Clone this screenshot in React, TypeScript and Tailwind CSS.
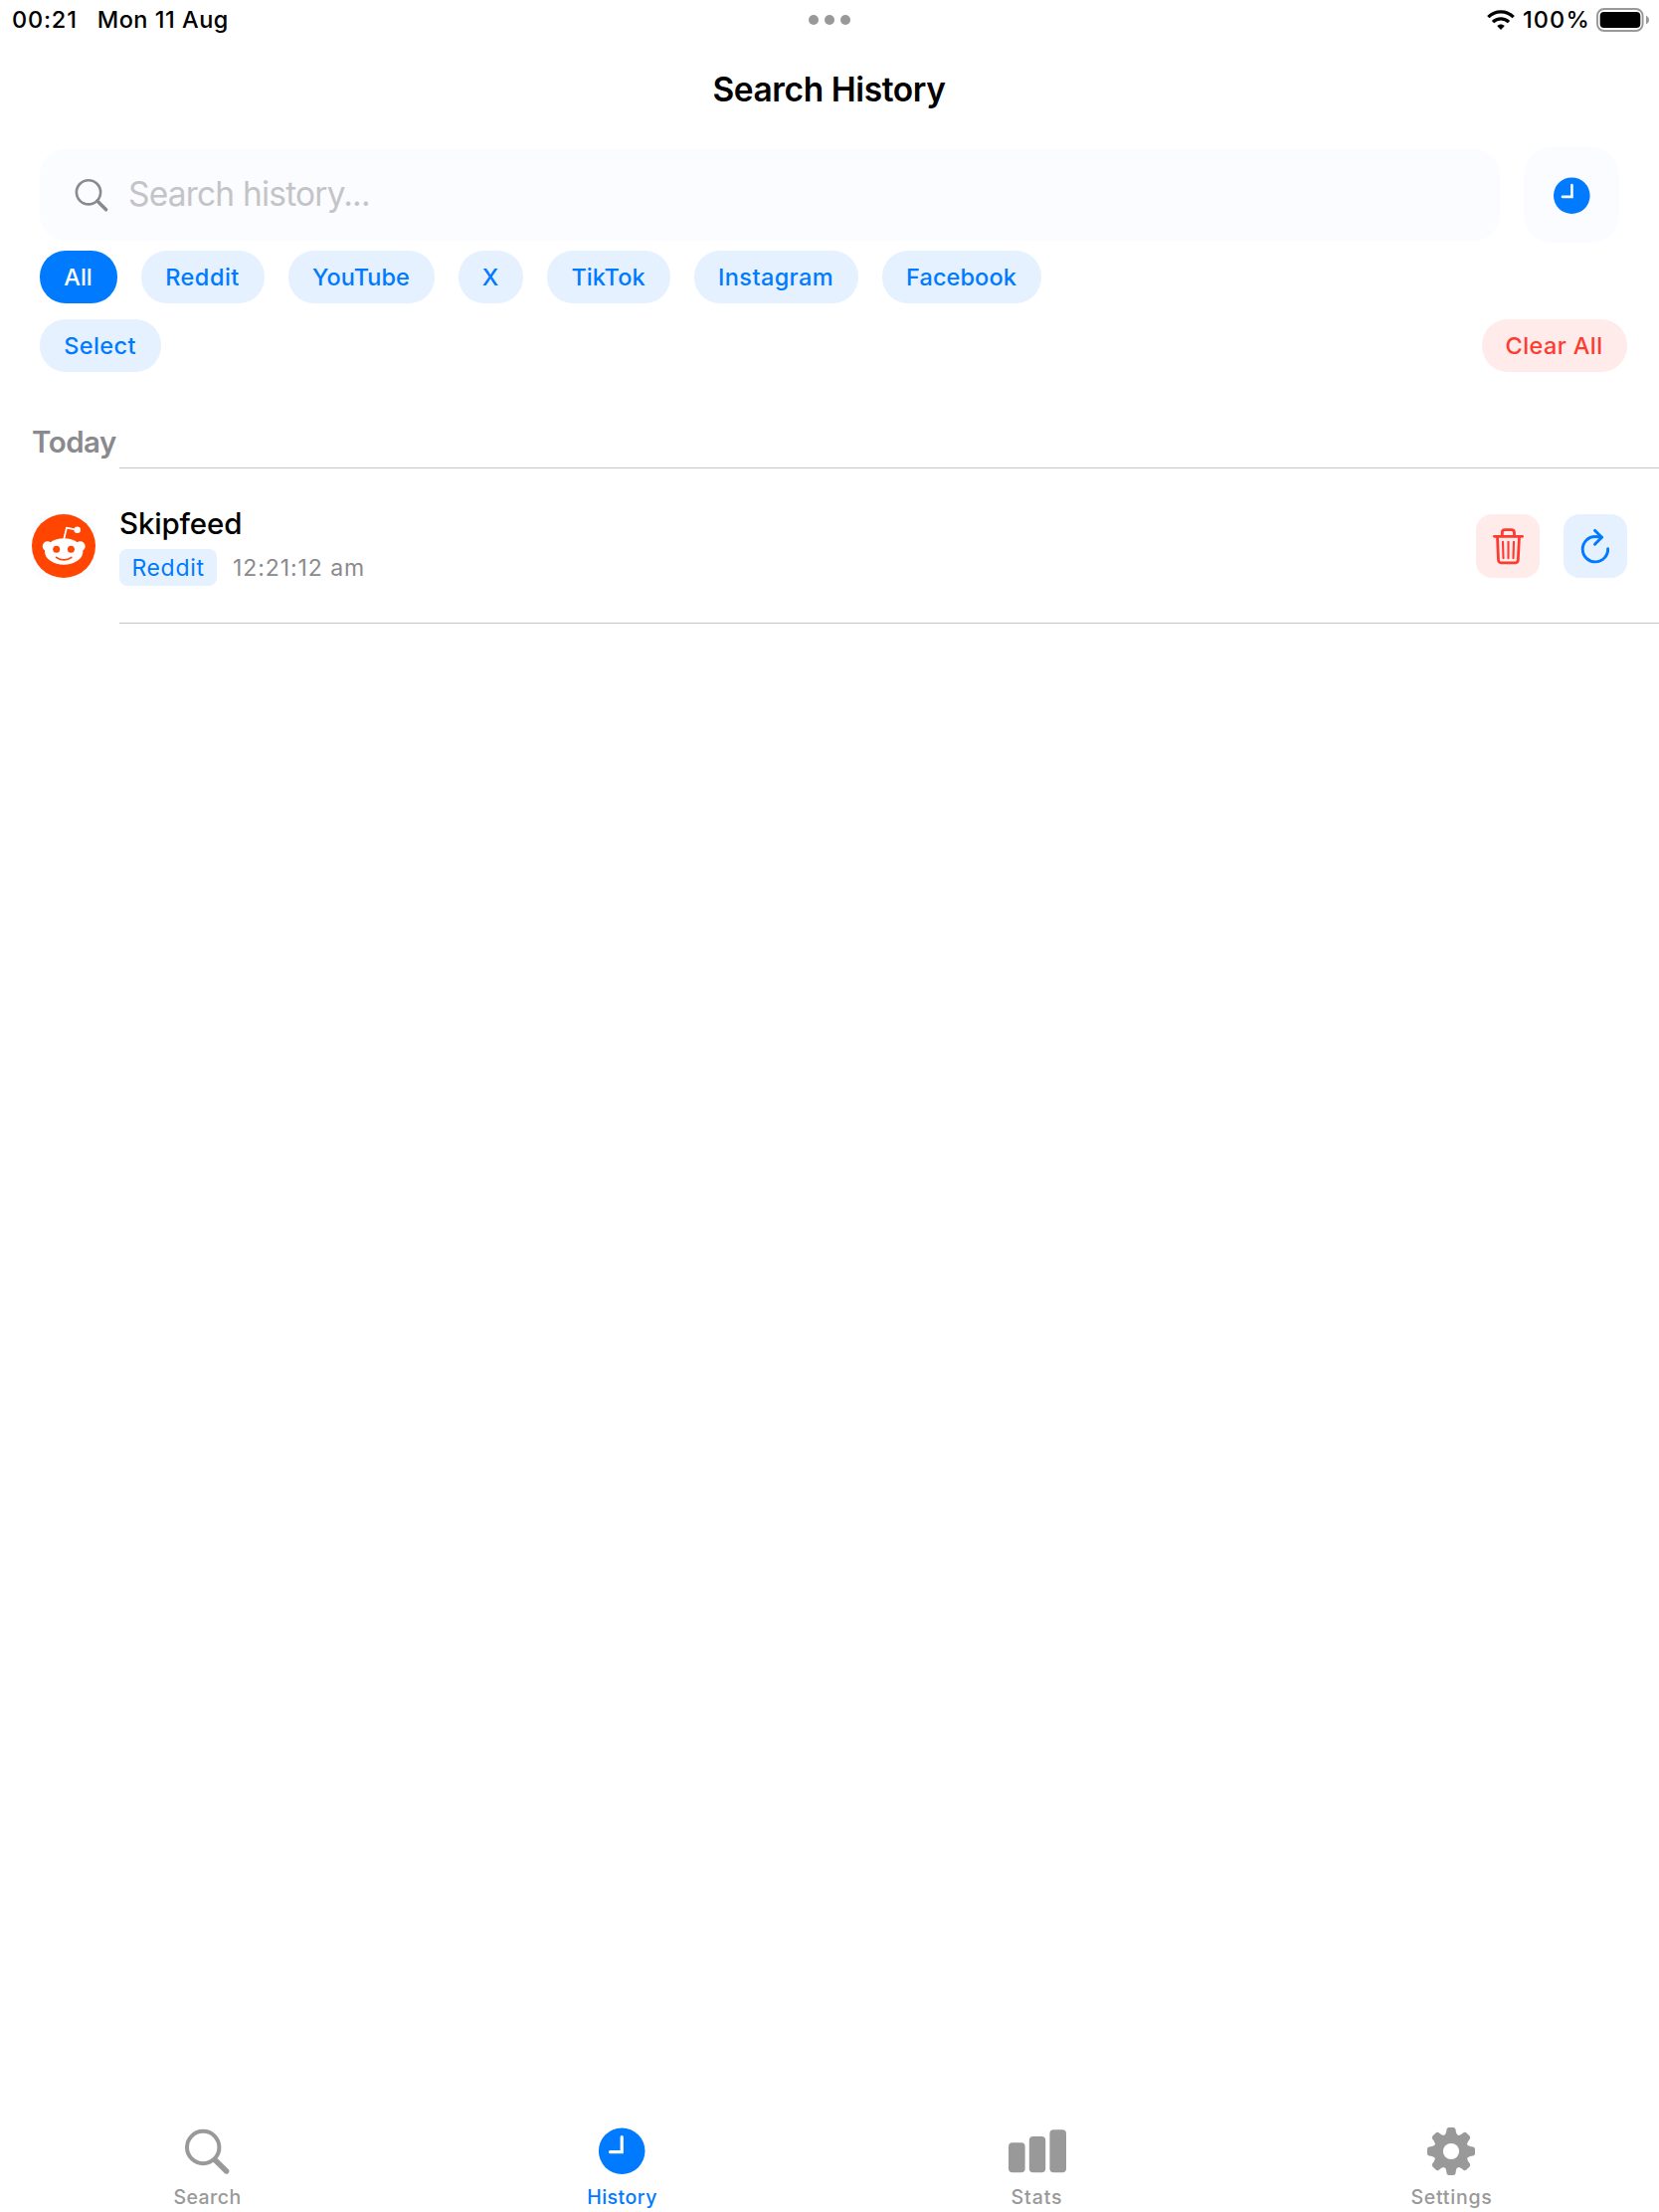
import type { ReactNode } from "react";

const GEAR_ANGLES = [0, 45, 90, 135, 180, 225, 270, 315];

function WifiIcon() {
  return (
    <svg width="28" height="20" viewBox="0 0 28 20" fill="none" stroke="#000" strokeWidth="3.3">
      <path d="M1.3 7.2C8.4 0.1 19.6 0.1 26.7 7.2" />
      <path d="M6 12.1C10.5 7.7 17.5 7.7 22 12.1" />
      <path d="M14 20L10.2 16.1C12.3 14 15.7 14 17.8 16.1Z" fill="#000" stroke="none" />
    </svg>
  );
}

function BatteryIcon() {
  return (
    <svg width="54" height="24" viewBox="0 0 54 24" fill="none">
      <rect x="1" y="1" width="45.6" height="22" rx="6.8" stroke="#999" strokeWidth="1.9" />
      <rect x="3.7" y="4" width="40.6" height="16" rx="4" fill="#000" />
      <path d="M50 7.7C51.8 8.4 53 10 53 12S51.8 15.6 50 16.3Z" fill="#999" />
    </svg>
  );
}

function SearchIcon() {
  return (
    <svg width="36" height="36" viewBox="0 0 36 36" fill="none" stroke="#8a8a8e" className="shrink-0">
      <circle cx="15" cy="15.3" r="12.1" strokeWidth="2.6" />
      <path d="M23.8 24L32.6 32.8" strokeWidth="3.5" strokeLinecap="round" />
    </svg>
  );
}

function ClockIcon() {
  return (
    <svg width="40" height="40" viewBox="0 0 40 40" fill="none">
      <circle cx="20.3" cy="20.7" r="18.3" fill="#007aff" />
      <path d="M20.4 10.2V21.8H11" stroke="#fbfcff" strokeWidth="2.7" strokeLinecap="round" />
    </svg>
  );
}

function RedditLogo() {
  return (
    <svg width="64" height="64" viewBox="0 0 64 64" fill="none">
      <circle cx="32" cy="32" r="32" fill="#ff4500" />
      <circle cx="15.7" cy="32.2" r="4.9" fill="#fff" />
      <circle cx="48.7" cy="32.2" r="4.9" fill="#fff" />
      <ellipse cx="32.2" cy="37.5" rx="19.2" ry="13.2" fill="#fff" />
      <path d="M32.3 25L34.9 13.7L44.5 15.7" stroke="#fff" strokeWidth="1.8" strokeLinejoin="round" />
      <circle cx="45.7" cy="15.8" r="3.3" fill="#fff" />
      <circle cx="24.7" cy="35.3" r="3.5" fill="#ff4500" />
      <circle cx="39.4" cy="35.3" r="3.5" fill="#ff4500" />
      <path d="M24.6 43.4C28.400 46.7 36 46.7 39.8 43.4" stroke="#ff4500" strokeWidth="1.7" strokeLinecap="round" />
    </svg>
  );
}

function TrashIcon() {
  return (
    <svg width="64" height="64" viewBox="0 0 64 64" fill="none" stroke="#ff3b30" strokeLinecap="round" strokeLinejoin="round">
      <path d="M18.4 22.3H46.6" strokeWidth="2.8" />
      <path d="M26.3 22V18.6Q26.3 15.7 29.2 15.7H35.6Q38.5 15.7 38.5 18.6V22" strokeWidth="2.8" />
      <path d="M21.5 22.5L22.5 46Q22.7 48.8 25.4 48.8H39.4Q42.1 48.8 42.3 46L43.5 22.5" strokeWidth="2.8" />
      <path d="M27 27.8L27.5 44.2M32.5 27.8V44.2M38 27.8L37.5 44.2" strokeWidth="2.1" />
    </svg>
  );
}

function RefreshIcon() {
  return (
    <svg width="64" height="64" viewBox="0 0 64 64" fill="none" stroke="#007aff" strokeWidth="2.9" strokeLinecap="round" strokeLinejoin="round">
      <path d="M44.6 34.700A12.7 12.7 0 1 1 31.9 22.5Q34.8 22.5 38.4 23.1" />
      <path d="M31.5 16.4L38.5 23.2L31.5 30.3" />
    </svg>
  );
}

function TabSearchIcon() {
  return (
    <svg width="49" height="48" viewBox="0 0 49 48" fill="none" stroke="#999">
      <circle cx="20.2" cy="20" r="16.2" strokeWidth="4" />
      <path d="M32.5 33L43.7 44" strokeWidth="5.4" strokeLinecap="round" />
    </svg>
  );
}

function TabClockIcon() {
  return (
    <svg width="49" height="48" viewBox="0 0 49 48" fill="none">
      <circle cx="24.2" cy="23.7" r="23.3" fill="#007aff" />
      <path d="M24.2 9.5V24.7H12.5" stroke="#fff" strokeWidth="3.2" strokeLinecap="round" />
    </svg>
  );
}

function TabStatsIcon() {
  return (
    <svg width="65" height="48" viewBox="0 0 65 48" fill="#999">
      <rect x="4" y="15.2" width="16.6" height="30" rx="4" />
      <rect x="24.8" y="9" width="16.4" height="36.2" rx="4" />
      <rect x="45.4" y="2.2" width="16.6" height="43" rx="4" />
    </svg>
  );
}

function TabSettingsIcon() {
  return (
    <svg width="49" height="48" viewBox="0 0 49 48" fill="none">
      <g fill="#999">
        <circle cx="24" cy="24" r="17.5" />
        {GEAR_ANGLES.map((angle) => (
          <path
            key={angle}
            transform={`rotate(${angle} 24 24)`}
            d="M15.500 9.500Q18.6 7.6 19.1 4.8L19.5 2Q19.9 0 21.8 0H26.2Q28.1 0 28.5 2L28.900 4.8Q29.4 7.6 32.500 9.500Z"
          />
        ))}
      </g>
      <circle cx="24" cy="24" r="8.1" fill="#fff" />
    </svg>
  );
}

const pillBase = "flex h-[53px] items-center justify-center whitespace-nowrap rounded-[26px] pr-px text-[23.5px] font-medium";

const filters = [
  { label: "All", style: "w-[78px] bg-[#007aff] text-white" },
  { label: "Reddit", style: "w-[124px] bg-[#e5f1ff] text-[#007aff] tracking-[0.5px]" },
  { label: "YouTube", style: "w-[147px] bg-[#e5f1ff] text-[#007aff] tracking-[0.05px]" },
  { label: "X", style: "w-[65px] bg-[#e5f1ff] text-[#007aff]" },
  { label: "TikTok", style: "w-[124px] bg-[#e5f1ff] text-[#007aff] tracking-[0.05px]" },
  { label: "Instagram", style: "w-[165px] bg-[#e5f1ff] text-[#007aff] tracking-[0.4px]" },
  { label: "Facebook", style: "w-[160px] bg-[#e5f1ff] text-[#007aff] tracking-[0.1px]" },
];

function Tab({ icon, label, style }: { icon: ReactNode; label: string; style: string }) {
  return (
    <button className="flex flex-col items-center">
      {icon}
      <span className={`mt-2.5 text-[19.5px] leading-6 font-medium ${style}`}>{label}</span>
    </button>
  );
}

export default function App() {
  return (
    <div className="flex h-[2224px] w-[1668px] flex-col overflow-hidden bg-white font-['Inter',sans-serif] text-black">
      <header className="grid h-10 grid-cols-3 items-center text-[23.5px] font-medium">
        <div className="flex gap-[20px] pl-3 whitespace-nowrap">
          <span className="tracking-[0.8px]">00:21</span>
          <span className="tracking-[0.5px]">Mon 11 Aug</span>
        </div>
        <div className="flex justify-center gap-1.5">
          <span className="size-2.5 rounded-full bg-[#999]" />
          <span className="size-2.5 rounded-full bg-[#999]" />
          <span className="size-2.5 rounded-full bg-[#999]" />
        </div>
        <div className="flex items-center justify-end pr-[9px]">
          <WifiIcon />
          <span className="ml-2 w-[74px] tracking-[1.1px]">100%</span>
          <BatteryIcon />
        </div>
      </header>

      <h1 className="h-[108px] pr-px text-center text-[33.5px] leading-[100px] font-semibold tracking-[-0.4px]">Search History</h1>

      <div className="flex h-24 items-center gap-6 px-10">
        <div className="flex h-[92px] flex-1 items-center rounded-[26px] bg-[#fbfcff] pl-[34px]">
          <SearchIcon />
          <span className="pb-px pl-[19px] text-[33.5px] tracking-[-0.8px] text-[#c4c4c7]">Search history...</span>
        </div>
        <button className="flex size-24 items-center justify-center rounded-[28px] bg-[#fbfcff]">
          <ClockIcon />
        </button>
      </div>

      <div className="mt-2 flex gap-6 px-10">
        {filters.map((f) => (
          <button key={f.label} className={`${pillBase} ${f.style}`}>
            {f.label}
          </button>
        ))}
      </div>

      <div className="mt-4 flex justify-between pr-8 pl-10">
        <button className={`${pillBase} w-[122px] bg-[#e5f1ff] tracking-[0.4px] text-[#007aff]`}>Select</button>
        <button className={`${pillBase} w-[146px] bg-[#ffebea] tracking-[0.4px] text-[#ff3b30]`}>Clear All</button>
      </div>

      <h2 className="mt-[50px] h-[46px] pl-8 text-[29.5px] leading-10 font-semibold tracking-[-0.5px] text-[#8a8a8e]">Today</h2>
      <div className="ml-[120px] h-px bg-[#c6c6c8]" />

      <div className="flex h-[155px] items-start pt-[46px] pr-8 pl-8">
        <div className="size-16 rounded-2xl bg-[#fbfcff]">
          <RedditLogo />
        </div>
        <div className="-mt-[9px] ml-6 flex-1">
          <div className="text-[29.5px] leading-9 font-medium tracking-[-0.15px]">Skipfeed</div>
          <div className="mt-2 flex items-center">
            <span className="flex h-[37px] w-[98px] items-center justify-center rounded-lg bg-[#e5f1ff] pt-px text-[23px] tracking-[0.68px] text-[#007aff]">
              Reddit
            </span>
            <span className="ml-4 pt-px text-[23px] tracking-[0.92px] text-[#8a8a8e]">12:21:12 am</span>
          </div>
        </div>
        <div className="flex gap-6">
          <button className="size-16 rounded-2xl bg-[#ffebea]">
            <TrashIcon />
          </button>
          <button className="size-16 rounded-2xl bg-[#e5f1ff]">
            <RefreshIcon />
          </button>
        </div>
      </div>
      <div className="ml-[120px] h-px bg-[#c6c6c8]" />

      <nav className="mt-auto grid h-[85px] grid-cols-4">
        <Tab icon={<TabSearchIcon />} label="Search" style="tracking-[0.45px] text-[#999]" />
        <Tab icon={<TabClockIcon />} label="History" style="tracking-[0.5px] text-[#007aff]" />
        <Tab icon={<TabStatsIcon />} label="Stats" style="tracking-[0.9px] text-[#999]" />
        <Tab icon={<TabSettingsIcon />} label="Settings" style="tracking-[0.78px] text-[#999]" />
      </nav>
    </div>
  );
}
